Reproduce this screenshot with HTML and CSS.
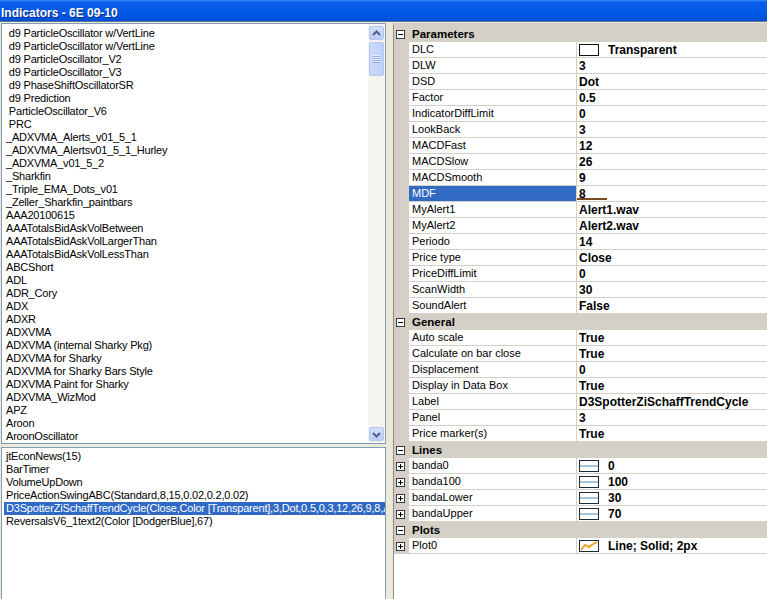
FILE: index.html
```html
<!DOCTYPE html>
<html lang="en">
<head>
  <meta charset="UTF-8">
  <meta name="viewport" content="width=device-width, initial-scale=1.0">
  <title>Indicators - 6E 09-10</title>
  <link rel="stylesheet" href="styles.css">
</head>
<body>
  <div class="window">
    <div class="titlebar">Indicators - 6E 09-10</div>
    <div class="content">
      <div class="left">
        <div class="listbox available">
          <ul class="items">
            <li> d9 ParticleOscillator w/VertLine</li>
            <li> d9 ParticleOscillator w/VertLine</li>
            <li> d9 ParticleOscillator_V2</li>
            <li> d9 ParticleOscillator_V3</li>
            <li> d9 PhaseShiftOscillatorSR</li>
            <li> d9 Prediction</li>
            <li> ParticleOscillator_V6</li>
            <li> PRC</li>
            <li>_ADXVMA_Alerts_v01_5_1</li>
            <li>_ADXVMA_Alertsv01_5_1_Hurley</li>
            <li>_ADXVMA_v01_5_2</li>
            <li>_Sharkfin</li>
            <li>_Triple_EMA_Dots_v01</li>
            <li>_Zeller_Sharkfin_paintbars</li>
            <li>AAA20100615</li>
            <li>AAATotalsBidAskVolBetween</li>
            <li>AAATotalsBidAskVolLargerThan</li>
            <li>AAATotalsBidAskVolLessThan</li>
            <li>ABCShort</li>
            <li>ADL</li>
            <li>ADR_Cory</li>
            <li>ADX</li>
            <li>ADXR</li>
            <li>ADXVMA</li>
            <li>ADXVMA (internal Sharky Pkg)</li>
            <li>ADXVMA for Sharky</li>
            <li>ADXVMA for Sharky Bars Style</li>
            <li>ADXVMA Paint for Sharky</li>
            <li>ADXVMA_WizMod</li>
            <li>APZ</li>
            <li>Aroon</li>
            <li>AroonOscillator</li>
          </ul>
          <div class="scrollbar">
            <div class="sb-btn">
              <svg width="13" height="13" viewBox="0 0 13 13"><path d="M3 8l3.5-3.5L10 8" fill="none" stroke="#4d6185" stroke-width="2"/></svg>
            </div>
            <div class="sb-thumb"><span class="grip"></span></div>
            <div class="sb-track"></div>
            <div class="sb-btn">
              <svg width="13" height="13" viewBox="0 0 13 13"><path d="M3 5l3.5 3.5L10 5" fill="none" stroke="#4d6185" stroke-width="2"/></svg>
            </div>
          </div>
        </div>
        <div class="listbox applied">
          <ul class="items">
            <li>jtEconNews(15)</li>
            <li>BarTimer</li>
            <li>VolumeUpDown</li>
            <li>PriceActionSwingABC(Standard,8,15,0.02,0.2,0.02)</li>
            <li class="selected">D3SpotterZiSchaffTrendCycle(Close,Color [Transparent],3,Dot,0.5,0,3,12,26,9,8,Alert1.wav,Alert2.wav,14,Close,0,30,False)</li>
            <li>ReversalsV6_1text2(Color [DodgerBlue],67)</li>
          </ul>
        </div>
      </div>

      <div class="propgrid">
        <div class="cat">
          <svg class="toggle" width="9" height="9"><rect x=".5" y=".5" width="8" height="8" fill="#fff" stroke="#3a3a3a"/><path d="M2 4.5h5" stroke="#000"/></svg>
          Parameters
        </div>
        <div class="row"><span class="gutter"></span><span class="name">DLC</span><span class="value">
          <svg class="swatch" width="20" height="12"><rect x=".5" y=".5" width="19" height="11" fill="#fff" stroke="#111"/></svg>Transparent</span></div>
        <div class="row"><span class="gutter"></span><span class="name">DLW</span><span class="value">3</span></div>
        <div class="row"><span class="gutter"></span><span class="name">DSD</span><span class="value">Dot</span></div>
        <div class="row"><span class="gutter"></span><span class="name">Factor</span><span class="value">0.5</span></div>
        <div class="row"><span class="gutter"></span><span class="name">IndicatorDiffLimit</span><span class="value">0</span></div>
        <div class="row"><span class="gutter"></span><span class="name">LookBack</span><span class="value">3</span></div>
        <div class="row"><span class="gutter"></span><span class="name">MACDFast</span><span class="value">12</span></div>
        <div class="row"><span class="gutter"></span><span class="name">MACDSlow</span><span class="value">26</span></div>
        <div class="row"><span class="gutter"></span><span class="name">MACDSmooth</span><span class="value">9</span></div>
        <div class="row active"><span class="gutter"></span><span class="name">MDF</span><span class="value editing">8</span></div>
        <div class="row"><span class="gutter"></span><span class="name">MyAlert1</span><span class="value">Alert1.wav</span></div>
        <div class="row"><span class="gutter"></span><span class="name">MyAlert2</span><span class="value">Alert2.wav</span></div>
        <div class="row"><span class="gutter"></span><span class="name">Periodo</span><span class="value">14</span></div>
        <div class="row"><span class="gutter"></span><span class="name">Price type</span><span class="value">Close</span></div>
        <div class="row"><span class="gutter"></span><span class="name">PriceDiffLimit</span><span class="value">0</span></div>
        <div class="row"><span class="gutter"></span><span class="name">ScanWidth</span><span class="value">30</span></div>
        <div class="row"><span class="gutter"></span><span class="name">SoundAlert</span><span class="value">False</span></div>

        <div class="cat">
          <svg class="toggle" width="9" height="9"><rect x=".5" y=".5" width="8" height="8" fill="#fff" stroke="#3a3a3a"/><path d="M2 4.5h5" stroke="#000"/></svg>
          General
        </div>
        <div class="row"><span class="gutter"></span><span class="name">Auto scale</span><span class="value">True</span></div>
        <div class="row"><span class="gutter"></span><span class="name">Calculate on bar close</span><span class="value">True</span></div>
        <div class="row"><span class="gutter"></span><span class="name">Displacement</span><span class="value">0</span></div>
        <div class="row"><span class="gutter"></span><span class="name">Display in Data Box</span><span class="value">True</span></div>
        <div class="row"><span class="gutter"></span><span class="name">Label</span><span class="value">D3SpotterZiSchaffTrendCycle</span></div>
        <div class="row"><span class="gutter"></span><span class="name">Panel</span><span class="value">3</span></div>
        <div class="row"><span class="gutter"></span><span class="name">Price marker(s)</span><span class="value">True</span></div>

        <div class="cat">
          <svg class="toggle" width="9" height="9"><rect x=".5" y=".5" width="8" height="8" fill="#fff" stroke="#3a3a3a"/><path d="M2 4.5h5" stroke="#000"/></svg>
          Lines
        </div>
        <div class="row"><span class="gutter"><svg class="toggle" width="9" height="9"><rect x=".5" y=".5" width="8" height="8" fill="#fff" stroke="#3a3a3a"/><path d="M2 4.5h5M4.5 2v5" stroke="#000"/></svg></span><span class="name">banda0</span><span class="value">
          <svg class="swatch" width="20" height="12"><rect x=".5" y=".5" width="19" height="11" fill="#fff" stroke="#1c2a36"/><path d="M1 6h18" stroke="#a6c6da" stroke-width="2"/></svg>0</span></div>
        <div class="row"><span class="gutter"><svg class="toggle" width="9" height="9"><rect x=".5" y=".5" width="8" height="8" fill="#fff" stroke="#3a3a3a"/><path d="M2 4.5h5M4.5 2v5" stroke="#000"/></svg></span><span class="name">banda100</span><span class="value">
          <svg class="swatch" width="20" height="12"><rect x=".5" y=".5" width="19" height="11" fill="#fff" stroke="#1c2a36"/><path d="M1 6h18" stroke="#a6c6da" stroke-width="2"/></svg>100</span></div>
        <div class="row"><span class="gutter"><svg class="toggle" width="9" height="9"><rect x=".5" y=".5" width="8" height="8" fill="#fff" stroke="#3a3a3a"/><path d="M2 4.5h5M4.5 2v5" stroke="#000"/></svg></span><span class="name">bandaLower</span><span class="value">
          <svg class="swatch" width="20" height="12"><rect x=".5" y=".5" width="19" height="11" fill="#fff" stroke="#1c2a36"/><path d="M1 6h18" stroke="#a6c6da" stroke-width="2"/></svg>30</span></div>
        <div class="row"><span class="gutter"><svg class="toggle" width="9" height="9"><rect x=".5" y=".5" width="8" height="8" fill="#fff" stroke="#3a3a3a"/><path d="M2 4.5h5M4.5 2v5" stroke="#000"/></svg></span><span class="name">bandaUpper</span><span class="value">
          <svg class="swatch" width="20" height="12"><rect x=".5" y=".5" width="19" height="11" fill="#fff" stroke="#1c2a36"/><path d="M1 6h18" stroke="#a6c6da" stroke-width="2"/></svg>70</span></div>

        <div class="cat">
          <svg class="toggle" width="9" height="9"><rect x=".5" y=".5" width="8" height="8" fill="#fff" stroke="#3a3a3a"/><path d="M2 4.5h5" stroke="#000"/></svg>
          Plots
        </div>
        <div class="row"><span class="gutter"><svg class="toggle" width="9" height="9"><rect x=".5" y=".5" width="8" height="8" fill="#fff" stroke="#3a3a3a"/><path d="M2 4.5h5M4.5 2v5" stroke="#000"/></svg></span><span class="name">Plot0</span><span class="value">
          <svg class="swatch" width="20" height="12"><rect x=".5" y=".5" width="19" height="11" fill="#fff" stroke="#1c2a36"/><path d="M2 10l4-5 4 2 4-3 4-2" fill="none" stroke="#eea52a" stroke-width="2"/></svg>Line; Solid; 2px</span></div>
      </div>
    </div>
  </div>
</body>
</html>
```

FILE: styles.css
```css
*{
  box-sizing: border-box;
}
body{
  margin: 0;
  background: #ece9d8;
  font-family: 'Liberation Sans', Arial, sans-serif;
  font-size: 11px;
  color: #000;
  overflow: hidden;
}
.window{
  height: 100vh;
  display: flex;
  flex-direction: column;
}
.titlebar{
  height: 22px;
  padding: 6px 0 0 1px;
  line-height: 14px;
  background: linear-gradient(#3b8df5 0, #0a5fea 2px, #0058e6 14px, #0350d6 21px);
  border-bottom: 1px solid #5f7590;
  color: #fff;
  font-size: 12px;
  font-weight: bold;
  text-shadow: 1px 1px 0 #0b2c8a;
}
.content{
  flex: 1;
  min-height: 0;
  display: flex;
}

/* left side: available + applied indicators */
.left{
  width: 386px;
  padding: 1px 0 0 1px;
  display: flex;
  flex-direction: column;
  gap: 3px;
}
.listbox{
  display: flex;
  background: #fff;
  border: 1px solid #7f9db9;
}
.available{
  height: 421px;
  flex: none;
}
.applied{
  flex: 1;
  border-bottom: 0;
}
.items{
  flex: 1;
  min-width: 0;
  list-style: none;
  margin: 0;
  padding: 3px 0 0 2px;
  overflow: hidden;
}
.applied .items{
  padding-top: 2px;
}
.items li{
  height: 13px;
  line-height: 13px;
  padding-left: 2px;
  white-space: pre;
  overflow: hidden;
  letter-spacing: -0.2px;
}
.items li.selected{
  background: #316ac5;
  color: #fff;
}

.scrollbar{
  width: 17px;
  display: flex;
  flex-direction: column;
  padding: 2px 1px 2px 1px;
  background: #f5f4ef;
}
.sb-btn{
  height: 14px;
  display: flex;
  align-items: center;
  justify-content: center;
  border: 1px solid #b3c6f0;
  border-radius: 2px;
  background: linear-gradient(#d3e0fd, #b9ccf8);
}
.sb-thumb{
  height: 34px;
  margin-top: 2px;
  display: flex;
  align-items: center;
  justify-content: center;
  border: 1px solid #b3c6f0;
  border-radius: 2px;
  background: linear-gradient(90deg, #cbdafc, #bcd0fa);
}
.grip{
  width: 7px;
  height: 8px;
  background: repeating-linear-gradient(#eef3fe 0 1px, #8fa9e4 1px 2px);
}
.sb-track{
  flex: 1;
}

/* right side: property grid */
.propgrid{
  flex: 1;
  margin: 1px 0 0 7px;
  background: #fff;
  border-left: 1px solid #8c8c8c;
  border-top: 3px solid #d4d0c8;
}
.cat{
  height: 16px;
  display: flex;
  align-items: center;
  gap: 7px;
  padding-left: 2px;
  background: #d4d0c8;
  font-size: 11.5px;
  font-weight: bold;
}
.toggle{
  display: block;
  flex: none;
}
.row{
  display: grid;
  grid-template-columns: 15px 167px 1fr;
  height: 16px;
}
.gutter{
  background: #d4d0c8;
  display: flex;
  align-items: center;
  padding-left: 2px;
}
.name{
  padding-left: 3px;
  line-height: 15px;
  border-bottom: 1px solid #d4d0c8;
  white-space: nowrap;
  overflow: hidden;
}
.value{
  position: relative;
  display: flex;
  align-items: center;
  padding-left: 2px;
  border-left: 1px solid #d4d0c8;
  border-bottom: 1px solid #d4d0c8;
  font-size: 12px;
  font-weight: bold;
  white-space: nowrap;
}
.swatch{
  flex: none;
  margin-right: 9px;
}
.row.active .name{
  background: #316ac5;
  color: #fff;
}
.value.editing::after{
  content: '';
  position: absolute;
  left: 0;
  top: 12px;
  width: 30px;
  height: 2px;
  background: #7b4a21;
}
```
